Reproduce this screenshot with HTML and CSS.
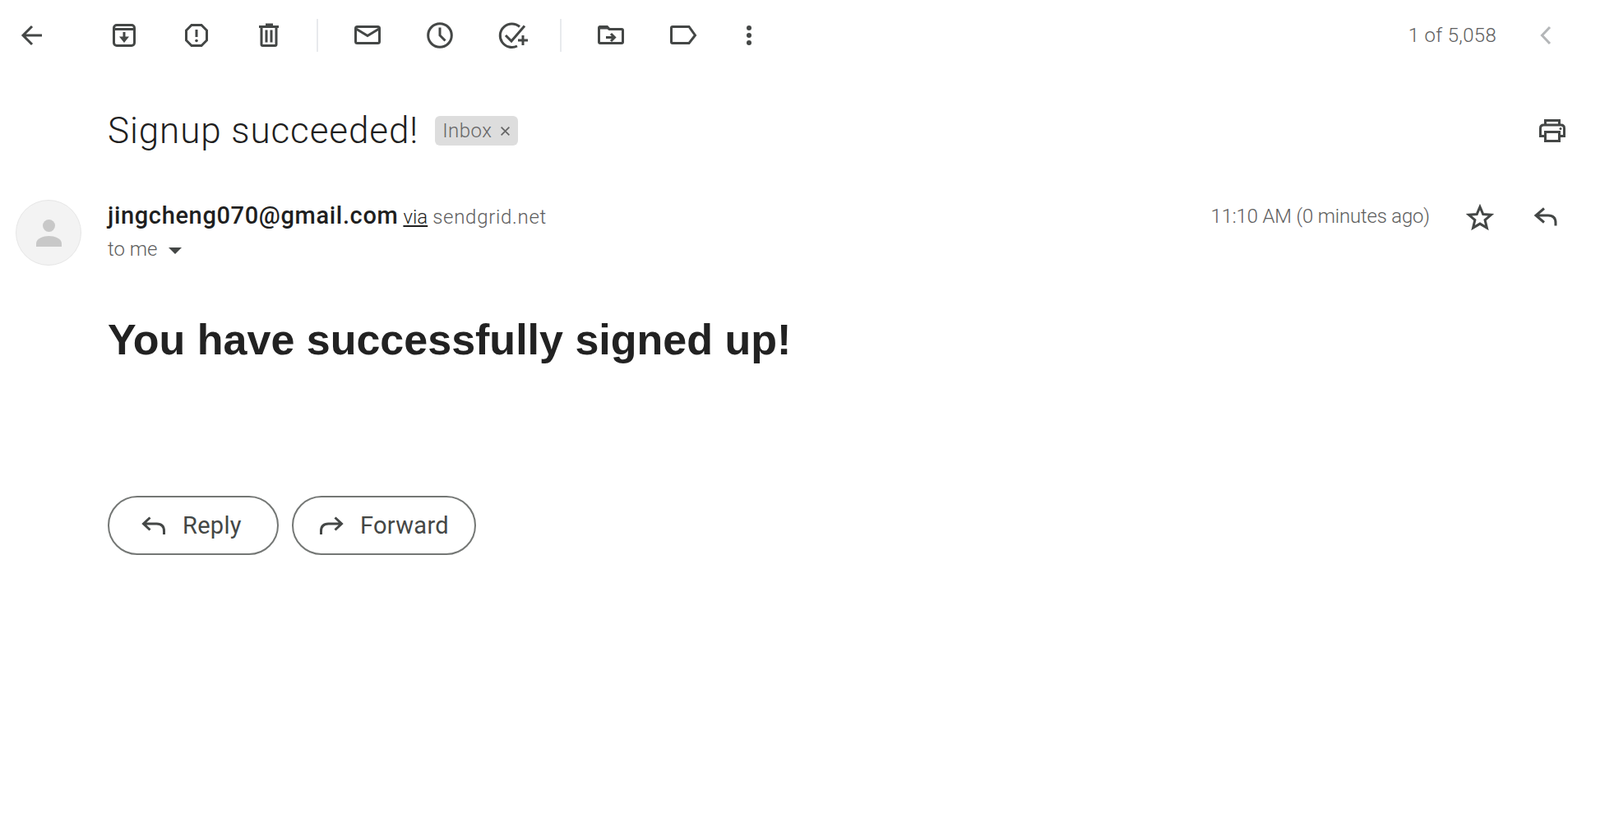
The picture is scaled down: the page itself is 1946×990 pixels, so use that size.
FILE: index.html
```html
<!DOCTYPE html>
<html lang="en">
  <head>
    <meta charset="UTF-8" />
    <title>Signup succeeded!</title>
    <link rel="stylesheet" href="styles.css">
  </head>
  <body>
    <!-- toolbar -->
    <div class="toolbar">
      <button class="tool tool-back">
        <svg class="icon" viewBox="0 0 40 40"><path d="M32 20H9M20 9 9 20l11 11"/></svg>
      </button>
      <button class="tool">
        <svg class="icon" viewBox="0 0 40 40"><rect x="7.500" y="7.500" width="25" height="25" rx="3.500"/><path d="M8 12.500h24"/><path d="M20 16v9"/><path class="solid" d="m14 21.500 6 7.500 6-7.500z"/></svg>
      </button>
      <button class="tool">
        <svg class="icon" viewBox="0 0 40 40"><path d="M14 7.500h12l6.500 6.500v12L26 32.500H14L7.500 26V14z"/><path d="M20 13v9"/><circle class="solid" cx="20" cy="26.500" r="1.800"/></svg>
      </button>
      <button class="tool">
        <svg class="icon" viewBox="0 0 40 40"><path d="M8 9.500h24M16 7h9M11 9.500V31q0 1.500 1.500 1.500h15Q29 32.500 29 31V9.500M17 13.500v15M23 13.500v15"/></svg>
      </button>
      <span class="divider"></span>
      <button class="tool">
        <svg class="icon" viewBox="0 0 40 40"><rect x="5.500" y="9.500" width="29" height="20" rx="2"/><path d="m6 12 14 8.500L34 12"/></svg>
      </button>
      <button class="tool">
        <svg class="icon" viewBox="0 0 40 40"><circle cx="20" cy="20" r="14.300"/><path d="M20 10.500V20l6.500 6.500"/></svg>
      </button>
      <button class="tool">
        <svg class="icon" viewBox="0 0 40 40"><path d="M29 9.500A14.300 14.300 0 1 0 26 33M12 20l7 7L35 8.500M33 20v12M27 26h12"/></svg>
      </button>
      <span class="divider"></span>
      <button class="tool">
        <svg class="icon" viewBox="0 0 40 40"><path d="M7 9.500h8l3 3h15q1.500 0 1.500 1.500v14q0 1.500-1.500 1.500H7q-1.500 0-1.500-1.500V11Q5.500 9.500 7 9.500z"/><path class="solid" d="M6 8h10l4 4.500H6z"/><path d="M14 22.500h10M20 18l4.500 4.500L20 27"/></svg>
      </button>
      <button class="tool">
        <svg class="icon" viewBox="0 0 40 40"><path d="M7 9.500h20L34.500 20 27 29.500H7q-1.500 0-1.500-1.500V11Q5.500 9.500 7 9.500z"/></svg>
      </button>
      <button class="tool tool-more">
        <svg class="icon" viewBox="0 0 40 40"><circle class="solid" cx="20" cy="11" r="3"/><circle class="solid" cx="20" cy="20" r="3"/><circle class="solid" cx="20" cy="29" r="3"/></svg>
      </button>
      <span class="counter">1 of 5,058</span>
      <button class="tool tool-prev">
        <svg class="icon icon-muted" viewBox="0 0 40 40"><path d="M25 10 15.500 20l9.500 10"/></svg>
      </button>
    </div>

    <!-- subject -->
    <div class="subject">
      <h1 class="subject-title">Signup succeeded!</h1>
      <span class="chip">Inbox
        <svg class="chip-close" viewBox="0 0 12 12"><path d="m1.500 1.500 9 9M10.500 1.500l-9 9"/></svg>
      </span>
      <button class="tool tool-print">
        <svg class="icon" viewBox="0 0 40 40"><path d="M11.500 13V7.500h17V13M11.500 26.500H5.500V17q0-4 4-4h21q4 0 4 4v9.500h-6"/><path d="M11.500 21.500h17v11h-17z"/><circle class="solid" cx="30" cy="17.500" r="1.500"/></svg>
      </button>
    </div>

    <!-- sender -->
    <div class="message-head">
      <div class="avatar">
        <svg class="avatar-person" viewBox="0 0 31 33"><circle cx="15.500" cy="7.500" r="7.500"/><path d="M0 33v-4c0-6 9-9 15.500-9S31 23 31 29v4z"/></svg>
      </div>
      <div class="sender">
        <div class="sender-line">
          <span class="sender-name">jingcheng070@gmail.com</span>
          <span class="via">via</span>
          <span class="sender-domain">sendgrid.net</span>
        </div>
        <div class="to-line">to me <span class="caret"></span></div>
      </div>
      <span class="time">11:10 AM (0 minutes ago)</span>
      <button class="tool tool-star">
        <svg class="icon" viewBox="0 0 40 40"><path d="m20 7.500 3.800 9 9.700.8-7.400 6.300 2.300 9.500-8.400-5-8.400 5 2.300-9.500-7.400-6.300 9.700-.8z"/></svg>
      </button>
      <button class="tool tool-reply">
        <svg class="icon" viewBox="0 0 40 40"><path d="M18 9.500 8 18l10 8.500M8 18h15q9 0 9 9v3.500"/></svg>
      </button>
    </div>

    <h2 class="body-text">You have successfully signed up!</h2>

    <div class="actions">
      <button class="pill pill-reply">
        <svg class="icon" viewBox="0 0 40 40"><path d="M15.500 10.500 7.500 18l8 7.500M8 18h15.500q9 0 9 9v4"/></svg>
        Reply
      </button>
      <button class="pill pill-forward">
        <svg class="icon" viewBox="0 0 40 40"><path d="M24.500 10.500l8 7.500-8 7.500M32 18H16.500q-9 0-9 9v4"/></svg>
        Forward
      </button>
    </div>
  </body>
</html>
```

FILE: styles.css
```css
* {
  box-sizing: border-box;
}

body {
  margin: 0;
  background-color: #ffffff;
  font-family: Roboto, "Noto Sans", sans-serif;
  color: #444746;
}

button {
  font-family: inherit;
  background: none;
  border: none;
  padding: 0;
}

.icon {
  width: 40px;
  height: 40px;
  fill: none;
  stroke: #444746;
  stroke-width: 3;
  display: block;
}

.icon .solid {
  fill: #444746;
  stroke: none;
}

.icon-muted {
  stroke: #b4b6b8;
}

.tool {
  width: 88px;
  height: 40px;
  display: flex;
  align-items: center;
  justify-content: center;
  flex: none;
}

/* toolbar */
.toolbar {
  height: 85px;
  display: flex;
  align-items: center;
}

.tool-back {
  width: 78px;
  margin-right: 29px;
}

.tool-more {
  width: 72px;
}

.tool-prev {
  width: 40px;
  margin-left: 40px;
  margin-right: 46px;
}

.divider {
  width: 2px;
  height: 40px;
  margin: 0 16px 0 14px;
  background-color: #e8eaed;
  flex: none;
}

.counter {
  margin-left: auto;
  font-size: 24px;
  font-weight: 300;
  letter-spacing: 0.3px;
  color: #5e5e5e;
}

/* subject */
.subject {
  height: 54px;
  margin-top: 47px;
  padding-left: 131px;
  display: flex;
  align-items: center;
}

.subject-title {
  margin: 0;
  font-size: 44px;
  font-weight: 300;
  letter-spacing: 0.9px;
  color: #1f1f1f;
  white-space: nowrap;
}

.chip {
  height: 36px;
  margin-left: 20px;
  padding: 0 9px;
  display: flex;
  align-items: center;
  gap: 10px;
  border-radius: 6px;
  background-color: #dddddd;
  font-size: 24px;
  font-weight: 300;
  letter-spacing: 0.5px;
  color: #666666;
}

.chip-close {
  width: 13px;
  height: 13px;
  fill: none;
  stroke: #666666;
  stroke-width: 1.6;
}

.tool-print {
  width: 40px;
  margin-left: auto;
  margin-right: 38px;
}

/* sender */
.message-head {
  margin-top: 57px;
  padding-left: 19px;
  display: flex;
  align-items: flex-start;
}

.avatar {
  width: 80px;
  height: 80px;
  border-radius: 50%;
  background-color: #f3f3f3;
  border: 1px solid #e6e6e6;
  display: flex;
  align-items: center;
  justify-content: center;
  flex: none;
}

.avatar-person {
  width: 31px;
  height: 33px;
  fill: #c8c8c8;
}

.sender {
  margin-left: 32px;
  padding-top: 2px;
}

.sender-line {
  display: flex;
  align-items: baseline;
  gap: 6px;
  font-size: 24px;
  font-weight: 300;
  letter-spacing: 0.7px;
  color: #5e5e5e;
  white-space: nowrap;
}

.sender-name {
  font-size: 29px;
  font-weight: 500;
  letter-spacing: 0.65px;
  color: #1f1f1f;
}

.via {
  letter-spacing: 0;
  color: #1f1f1f;
  text-decoration: underline;
}

.to-line {
  margin-top: 10px;
  display: flex;
  align-items: center;
  font-size: 24px;
  font-weight: 300;
  color: #5e5e5e;
}

.caret {
  width: 0;
  height: 0;
  margin-left: 14px;
  margin-top: 3px;
  border-left: 8px solid transparent;
  border-right: 8px solid transparent;
  border-top: 8px solid #444746;
}

.time {
  margin-left: auto;
  padding-top: 6px;
  font-size: 24px;
  font-weight: 300;
  letter-spacing: -0.2px;
  color: #5e5e5e;
  white-space: nowrap;
}

.tool-star {
  width: 40px;
  margin-left: 41px;
  margin-top: 1px;
}

.tool-reply {
  width: 40px;
  margin-left: 40px;
  margin-right: 46px;
  margin-top: 1px;
}

/* message */
.body-text {
  margin: 60px 0 0 131px;
  font-family: "Liberation Sans", Arial, sans-serif;
  font-size: 52px;
  font-weight: 700;
  color: #222222;
}

.actions {
  margin: 160px 0 0 131px;
  display: flex;
  gap: 16px;
}

.pill {
  height: 72px;
  display: flex;
  align-items: center;
  border: 2px solid #747775;
  border-radius: 36px;
  font-size: 29px;
  letter-spacing: 0.3px;
  color: #444746;
}

.pill-reply {
  width: 208px;
  padding-left: 34px;
  gap: 15px;
}

.pill-forward {
  width: 224px;
  padding-left: 26px;
  gap: 15px;
}
```
